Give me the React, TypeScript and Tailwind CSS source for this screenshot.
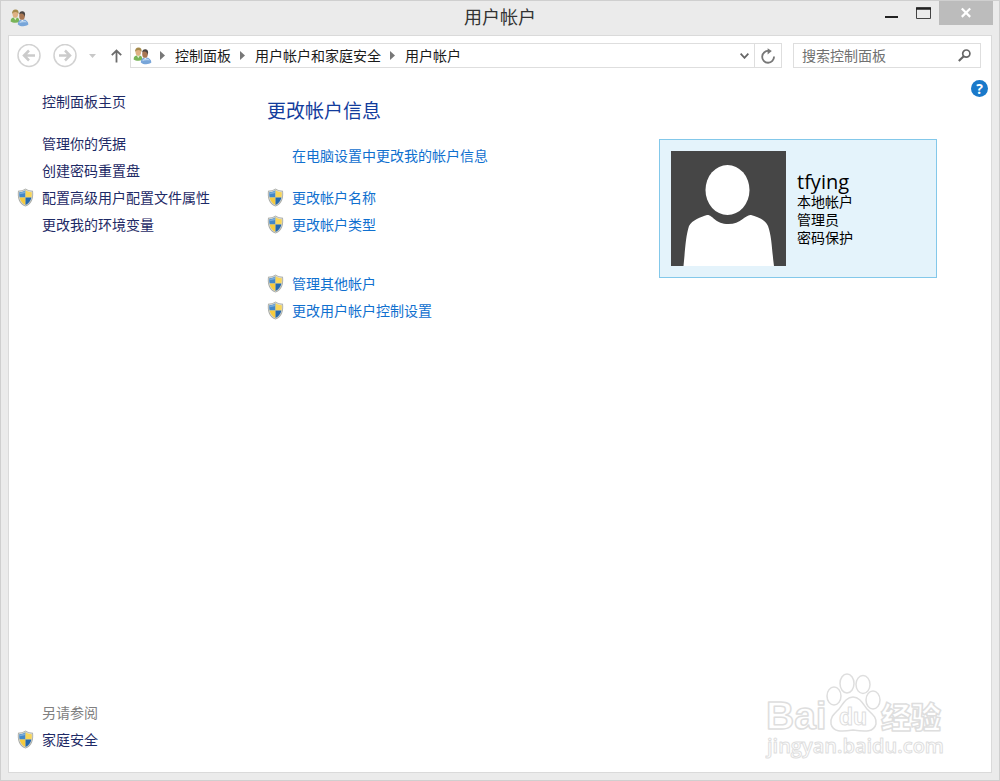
import type { ReactNode } from "react";

type Enlace = {
  texto: string;
  escudo?: boolean;
};

const tareas: Enlace[] = [
  { texto: "管理你的凭据" },
  { texto: "创建密码重置盘" },
  { texto: "配置高级用户配置文件属性", escudo: true },
  { texto: "更改我的环境变量" },
];

const accionesCuenta: Enlace[] = [
  { texto: "更改帐户名称", escudo: true },
  { texto: "更改帐户类型", escudo: true },
];

const otrasAcciones: Enlace[] = [
  { texto: "管理其他帐户", escudo: true },
  { texto: "更改用户帐户控制设置", escudo: true },
];

const ruta = ["控制面板", "用户帐户和家庭安全", "用户帐户"];

function IconoEscudo() {
  return (
    <svg className="h-[19px] w-[17px] shrink-0" viewBox="0 0 17 19" aria-hidden="true">
      <path d="M8.5 .4C6.3 1.9 3.7 2.6 1 2.7 .2 9.8 1.6 15.6 8.5 18.6 15.4 15.6 16.8 9.8 16 2.7 13.3 2.6 10.7 1.9 8.5 .4Z" fill="#a9aba6" />
      <path d="M8.5 1.3C6.5 2.6 4.2 3.4 1.7 3.5 1.2 9.6 2.6 14.9 8.5 17.7 14.4 14.9 15.8 9.6 15.3 3.5 12.8 3.4 10.5 2.6 8.5 1.3Z" fill="#d9dbd6" />
      <path d="M8.5 2.2C6.7 3.4 4.6 4.1 2.3 4.3 2.1 6.2 2.2 7.9 2.6 9.5H8.5Z" fill="#4387c8" />
      <path d="M8.5 2.2C10.3 3.4 12.4 4.1 14.7 4.3 14.9 6.2 14.8 7.9 14.4 9.5H8.5Z" fill="#f9d658" />
      <path d="M2.6 9.500C3.400 13 5.300 15.500 8.500 17V9.500Z" fill="#f6cb3e" />
      <path d="M14.4 9.500C13.600 13 11.700 15.500 8.500 17V9.500Z" fill="#2468ae" />
      <path d="M2.700 4.700C4.800 4.500 6.600 3.900 8.100 3V5C6.500 5.700 4.500 6.200 2.600 6.200Z" fill="#9cc4e6" opacity=".6" />
    </svg>
  );
}

function IconoUsuarios() {
  return (
    <svg className="h-[18px] w-[19px] shrink-0" viewBox="0 0 19 18" aria-hidden="true">
      <path d="M.6 12.4C.6 9.6 2.2 8.200 5.300 8.200 8 8.200 9.400 9.600 9.400 12.800 6.800 14.200 2.700 14 .6 12.400Z" fill="#79b458" />
      <path d="M3.5 8.2 5.3 11.3 7.1 8.2Z" fill="#e4efd3" />
      <ellipse cx="5.3" cy="5" rx="2.8" ry="3.7" fill="#dfb184" />
      <path d="M2.200 5.300C1.700 2.200 3.200 .6 5.500 .5 8 .5 9 2.200 8.500 5.100 8 3.600 6.900 3 5.500 2.900 3.800 2.900 2.700 3.700 2.200 5.300Z" fill="#a58a4b" />
      <path d="M7.800 15.400C7.700 12.200 9.400 10.500 12.700 10.400 16.300 10.400 18.200 12.400 18.400 15.600 15.600 17.700 10.500 17.900 7.800 15.400Z" fill="#77a5d9" />
      <path d="M9.300 14.200C9.500 12.300 11 11.500 12.900 11.400 14.800 11.300 16.300 12.100 16.800 13.600 14 12.900 11.500 13.100 9.300 14.200Z" fill="#b6d2ef" />
      <path d="M10.700 10.400 12.300 12.300 13.900 10.500Z" fill="#f1f5fa" />
      <ellipse cx="12" cy="6.900" rx="2.800" ry="3.900" fill="#a97753" />
      <path d="M9.300 5.500C9.200 3 10.600 2 12.600 2.200 15 2.500 15.700 4.700 14.700 7.900 14.400 5.900 13.200 4.900 11.700 4.600 10.600 4.400 9.900 4.700 9.300 5.500Z" fill="#4b4542" />
    </svg>
  );
}

function IconoFlechaCirculo({ derecha = false }: { derecha?: boolean }) {
  return (
    <svg className="h-6 w-6" viewBox="0 0 24 24" fill="none" aria-hidden="true">
      <circle cx="12" cy="11.500" r="11" stroke="#d2d2d2" strokeWidth="1.500" />
      <path
        d={derecha ? "M6 11.500H17M12 6.500 17 11.500 12 16.500" : "M18 11.500H7M12 6.500 7 11.500 12 16.500"}
        stroke="#cbcbcb"
        strokeWidth="2.500"
      />
    </svg>
  );
}

function Separador() {
  return (
    <svg className="h-[9px] w-[5px] shrink-0" viewBox="0 0 5 9" aria-hidden="true">
      <path d="M0 0 5 4.500 0 9Z" fill="#777" />
    </svg>
  );
}

function FilaEnlace({ color, escudo, children }: { color: string; escudo?: boolean; children: ReactNode }) {
  return (
    <li className="flex h-[27px] items-center gap-2">
      {escudo ? <IconoEscudo /> : <span className="w-[17px] shrink-0" />}
      <a href="#" className={`whitespace-nowrap hover:underline ${color}`}>
        {children}
      </a>
    </li>
  );
}

function ListaEnlaces({ enlaces, color }: { enlaces: Enlace[]; color: string }) {
  return (
    <ul>
      {enlaces.map((enlace) => (
        <FilaEnlace key={enlace.texto} color={color} escudo={enlace.escudo}>
          {enlace.texto}
        </FilaEnlace>
      ))}
    </ul>
  );
}

function BarraTitulo() {
  return (
    <header className="grid h-[34px] grid-cols-[1fr_auto_1fr] items-start">
      <div className="pt-2 pl-[9px]">
        <IconoUsuarios />
      </div>
      <h1 className="pt-1 text-[18px] leading-6 text-[#333]">用户帐户</h1>
      <div className="flex justify-end pr-[6px]">
        <button type="button" aria-label="最小化" className="flex h-6 w-[31px] justify-center">
          <svg className="h-6 w-[13px]" viewBox="0 0 13 24">
            <path d="M0 16H13" stroke="#222" strokeWidth="2" />
          </svg>
        </button>
        <button type="button" aria-label="最大化" className="flex h-6 w-[32px] justify-center">
          <svg className="h-6 w-[15px]" viewBox="0 0 15 24" fill="none">
            <path d="M.5 7H14.500V17.500H.5Z" stroke="#444" />
            <path d="M0 7.500H15" stroke="#222" strokeWidth="2.500" />
          </svg>
        </button>
        <button type="button" aria-label="关闭" className="flex h-6 w-[54px] justify-center bg-[#bcbcbc]">
          <svg className="h-6 w-[10px]" viewBox="0 0 10 24">
            <path d="M.8 7.500 9.200 15.900M9.200 7.500 .8 15.900" stroke="#fff" strokeWidth="2.200" />
          </svg>
        </button>
      </div>
    </header>
  );
}

function BarraNavegacion() {
  return (
    <nav className="flex items-center pt-[7px] pr-[10px] pl-2">
      <button type="button" aria-label="后退">
        <IconoFlechaCirculo />
      </button>
      <button type="button" aria-label="前进" className="ml-3">
        <IconoFlechaCirculo derecha />
      </button>
      <button type="button" aria-label="最近位置" className="ml-3">
        <svg className="h-1 w-[7px]" viewBox="0 0 7 4">
          <path d="M0 0H7L3.500 4Z" fill="#c8c8c8" />
        </svg>
      </button>
      <button type="button" aria-label="向上" className="ml-[15px]">
        <svg className="h-[14px] w-[11px]" viewBox="0 0 11 14" fill="none">
          <path d="M5.500 13.500V1.500M.8 6.200 5.500 1.500 10.200 6.200" stroke="#6b6b6b" strokeWidth="1.800" />
        </svg>
      </button>

      <div className="ml-2 flex h-[25px] min-w-0 flex-1 items-center border border-[#dedede] pl-[2px]">
        <IconoUsuarios />
        <ol className="ml-2 flex flex-1 items-center">
          {ruta.map((parte) => (
            <li key={parte} className="mr-[9px] flex items-center gap-[10px] whitespace-nowrap">
              <Separador />
              <a href="#" className="leading-[22px] text-[#1a1a1a]">
                {parte}
              </a>
            </li>
          ))}
        </ol>
        <button type="button" aria-label="以前的位置" className="flex h-full w-5 items-center justify-center">
          <svg className="h-[6px] w-[9px]" viewBox="0 0 9 6" fill="none">
            <path d="M.6 .6 4.500 4.800 8.400 .6" stroke="#666" strokeWidth="1.800" />
          </svg>
        </button>
        <button
          type="button"
          aria-label="刷新"
          className="flex h-full w-[27px] items-center justify-center border-l border-[#dedede]"
        >
          <svg className="h-[16px] w-[14px]" viewBox="0 0 14 16" fill="none">
            <path d="M8 3A5.900 5.900 0 1 0 13 8.500" stroke="#777" strokeWidth="1.800" />
            <path d="M6.600 .2 10.800 3 6.600 6.400Z" fill="#777" />
          </svg>
        </button>
      </div>

      <div className="ml-[11px] flex h-[25px] w-[188px] items-center border border-[#dedede] pr-[9px] pl-2">
        <input
          type="text"
          aria-label="搜索控制面板"
          placeholder="搜索控制面板"
          className="min-w-0 flex-1 bg-transparent leading-5 outline-none placeholder:text-[#707070]"
        />
        <svg className="h-[13px] w-[13px]" viewBox="0 0 13 13" fill="none" aria-hidden="true">
          <circle cx="8.300" cy="4.600" r="3.600" stroke="#666" strokeWidth="1.700" />
          <path d="M5.700 7.200 .8 12.100" stroke="#666" strokeWidth="2.100" />
        </svg>
      </div>
    </nav>
  );
}

function TarjetaUsuario() {
  return (
    <section className="mt-[71px] flex h-[139px] w-[278px] shrink-0 items-center gap-[11px] border border-[#83c8ea] bg-[#e4f3fb] pl-[11px]">
      <svg className="h-[115px] w-[115px] shrink-0" viewBox="0 0 115 115" aria-hidden="true">
        <rect width="115" height="115" fill="#464646" />
        <ellipse cx="56.500" cy="39" rx="22" ry="25" fill="#fff" />
        <path
          d="M12.500 115C14 101 14.500 86 18 75 21 69 30 66 36 64 41 63 44 73 57.500 73 70 73 75 63 80 64 86 66 94 68 97 75 101 86 101 101 103 115Z"
          fill="#fff"
        />
      </svg>
      <div className="text-black">
        <h3 className="text-[20px] leading-[22px]">tfying</h3>
        <p className="leading-[18px]">本地帐户</p>
        <p className="leading-[18px]">管理员</p>
        <p className="leading-[18px]">密码保护</p>
      </div>
    </section>
  );
}

function MarcaAgua() {
  return (
    <svg
      className="pointer-events-none absolute right-[42px] bottom-3 h-[92px] w-[184px]"
      viewBox="0 0 184 92"
      fill="#fff"
      stroke="#dedede"
      strokeWidth="1.500"
      strokeLinejoin="round"
      aria-hidden="true"
    >
      <text x="1" y="61" fontSize="39" fontWeight="700" fontFamily="Liberation Sans, sans-serif">
        Bai
      </text>
      <ellipse cx="69" cy="28" rx="7" ry="9" />
      <ellipse cx="82" cy="15.500" rx="7" ry="9.500" />
      <ellipse cx="98" cy="16.500" rx="7" ry="9" />
      <ellipse cx="108" cy="32" rx="7" ry="9" />
      <path d="M88 29C81 29 78 36 74 41 69 46 65 49 66 56 68 64 76 64 88 62 101 64 109 64 111 56 112 49 107 46 102 41 98 36 95 29 88 29Z" />
      <text x="74" y="57" fontSize="23" fontWeight="700" strokeWidth="1" fontFamily="Liberation Sans, sans-serif">
        du
      </text>
      <text x="116" y="60" fontSize="30" fontWeight="900" fontFamily="Noto Sans CJK SC, sans-serif">
        经验
      </text>
      <text x="2" y="85" fontSize="20" fontWeight="600" strokeWidth="1" fontFamily="Open Sans, sans-serif">
        jingyan.baidu.com
      </text>
    </svg>
  );
}

export default function App() {
  return (
    <div className="flex min-h-screen flex-col border border-[#cfcfcf] bg-[#ebebeb] font-['Open_Sans','Noto_Sans_CJK_SC',sans-serif] text-sm">
      <BarraTitulo />

      <div className="relative mx-[7px] mb-[7px] flex flex-1 flex-col border border-[#dadada] bg-white">
        <BarraNavegacion />

        <div className="flex flex-1">
          <aside className="flex w-[258px] shrink-0 flex-col justify-between pt-5 pb-[19px] pl-2">
            <div>
              <ul className="mb-[15px]">
                <FilaEnlace color="text-[#1e2a66]">控制面板主页</FilaEnlace>
              </ul>
              <ListaEnlaces enlaces={tareas} color="text-[#1e2a66]" />
            </div>
            <div>
              <h2 className="flex h-[27px] items-center pl-[25px] text-[#808080]">另请参阅</h2>
              <ListaEnlaces enlaces={[{ texto: "家庭安全", escudo: true }]} color="text-[#1e2a66]" />
            </div>
          </aside>

          <main className="flex min-w-0 flex-1 items-start justify-between">
            <div className="pt-[30px]">
              <h2 className="mb-[17px] text-[19px] leading-[27px] text-[#123c9c]">更改帐户信息</h2>
              <ul className="mb-[15px]">
                <FilaEnlace color="text-[#1070cf]">在电脑设置中更改我的帐户信息</FilaEnlace>
              </ul>
              <ListaEnlaces enlaces={accionesCuenta} color="text-[#1070cf]" />
              <div className="h-8" />
              <ListaEnlaces enlaces={otrasAcciones} color="text-[#1070cf]" />
            </div>

            <div className="flex items-start gap-[34px] pr-[3px]">
              <TarjetaUsuario />
              <button
                type="button"
                aria-label="帮助"
                className="mt-3 flex h-[17px] w-[17px] items-center justify-center rounded-full bg-[#1979ca] font-bold text-white"
              >
                ?
              </button>
            </div>
          </main>
        </div>

        <MarcaAgua />
      </div>
    </div>
  );
}
